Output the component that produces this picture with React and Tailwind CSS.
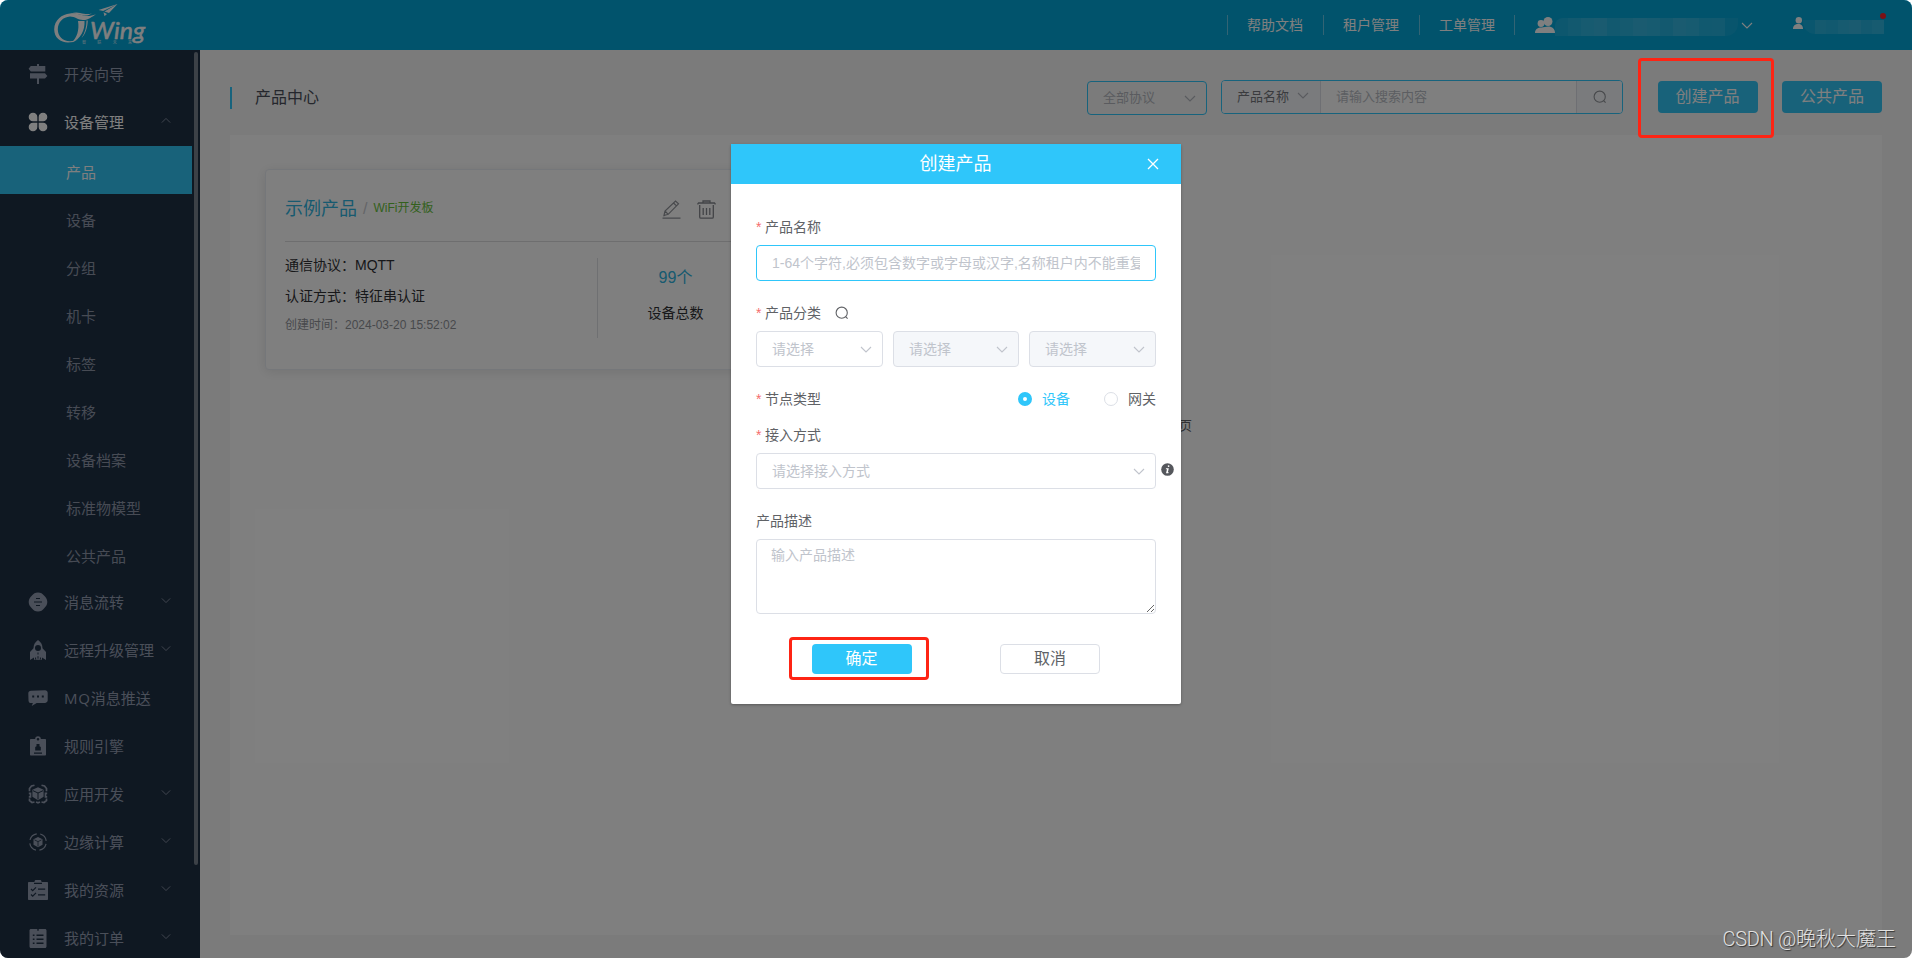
import React from "react";

const paths = {
  guide: (
    <>
      <path d="M9 0h2v2h6.300v5.500H2.800L0.600 4.800 2.800 2H9z" />
      <path d="M2 9.200h15L19.400 12 17 14.500h-6V20H9v-5.500H2z" />
    </>
  ),
  device: (
    <>
      <path d="M5 0.700C7.500 0.700 9.300 2.500 9.300 5v4.300H5C2.500 9.300 0.700 7.500 0.700 5S2.500 0.700 5 0.700z" />
      <path d="M15 0.700c2.500 0 4.300 1.800 4.300 4.300S17.500 9.300 15 9.300h-4.300V5c0-2.500 1.800-4.300 4.300-4.300z" />
      <path d="M5 10.700h4.300V15c0 2.500-1.800 4.300-4.300 4.300S0.700 17.500 0.700 15 2.500 10.700 5 10.700z" />
      <path d="M10.700 10.700H15c2.500 0 4.300 1.800 4.300 4.300s-1.800 4.300-4.300 4.300-4.300-1.800-4.300-4.300z" />
    </>
  ),
  flow: (
    <>
      <path d="M10 0.500c3 0 4.300 1.300 6 3s3.300 3.500 3.300 6.500-1.600 4.600-3.300 6.400-3 3.100-6 3.100-4.300-1.300-6-3.100S0.700 13 0.700 10 2.300 5.200 4 3.500 7 0.500 10 0.500z" />
      <path d="M8 6.500h4M6 10h8M8 13.500h4" stroke="#1e3045" strokeWidth="1.100" fill="none" />
    </>
  ),
  rocket: (
    <>
      <path fillRule="evenodd" d="M10 0c3 2 4.500 4.800 4.500 8.200L18 12v8l-4-2.500v2.200H6v-2.200L2 20v-8l3.500-3.800C5.500 4.800 7 2 10 0zm0 5a3 3 0 100 6 3 3 0 000-6z" />
      <path d="M10 12.500v2M10 16.200v2.500M7.600 17.500v2M12.400 17.500v2" stroke="#1e3045" strokeWidth="1" />
    </>
  ),
  chat: (
    <>
      <path d="M3 2.800L17 2.200c1.500 0 2.700 1 2.700 2.500v7.600c0 1.500-1 2.500-2.500 2.600l-8.500 0.200-5 2.900 1.200-2.900H2.800C1.300 15.100 0.600 14 0.500 12.500L0.300 5.500C0.300 3.900 1.400 2.900 3 2.800z" />
      <path d="M4.200 7.500h2v2h-2zM9 7.500h2v2H9zM13.800 7.500h2v2h-2z" fill="#1e3045" />
    </>
  ),
  badge: (
    <>
      <path fillRule="evenodd" d="M3 3h4.200C7 1.500 8.200 0.300 10 0.300S13 1.500 12.800 3H17c0.700 0 1 0.400 1 1v14.500c0 0.600-0.400 1-1 1H3c-0.600 0-1-0.400-1-1V4c0-0.600 0.400-1 1-1zm7-1a1.300 1.300 0 100 2.600A1.300 1.300 0 0010 2z" />
      <path d="M8.500 8h3v2.200L12.800 11v3.500H7.200V11l1.300-0.800zM6 16.400h8v1.300H6z" fill="#1e3045" />
    </>
  ),
  app: (
    <>
      <path d="M10 3.300l5.600 2.500v7L10 16.200l-5.600-3.400v-7z" />
      <path d="M5 6.700L10 9l5-2.300M10 9v6.500" stroke="#1e3045" strokeWidth="1" fill="none" />
      <path
        d="M6.500 1.200L3.500 2l-2 2.500v2.800M13.500 1.200l3 0.800 2 2.500v2.800M0.800 9.300h1.700v3.500H0.800M19.200 9.300h-1.700v3.500h1.700M1.500 14.500v2L4 18.500l2.500-0.500M18.500 14.500v2L16 18.500l-2.500-0.500M8 18l2 0.800 2-0.800"
        stroke="currentColor"
        strokeWidth="1.700"
        fill="none"
      />
    </>
  ),
  edge: (
    <>
      <circle cx="10" cy="10" r="8.300" fill="none" stroke="currentColor" strokeWidth="1.200" strokeDasharray="9.500 3.540" strokeDashoffset="-2" />
      <path d="M10 5l4.500 2.200v5.600L10 15.200l-4.500-2.400V7.200z" />
      <path d="M6.500 7.900L10 9.600l3.500-1.700M10 9.600v4.800" stroke="#1e3045" strokeWidth="0.800" fill="none" />
    </>
  ),
  resource: (
    <>
      <path d="M1 2h5.500V1.500c0-0.900 0.600-1.500 1.500-1.500h4c0.900 0 1.500 0.600 1.500 1.500V2H19c0.600 0 1 0.400 1 1v16c0 0.600-0.400 1-1 1H1c-0.600 0-1-0.400-1-1V3c0-0.600 0.400-1 1-1z" />
      <path d="M6 3.400h8M3 9l1.700 1.600L8 7.300M3 14.500l1.700 1.600L8 12.800M10 9.200h7.200M10 14.800h7.200" stroke="#1e3045" strokeWidth="1.200" fill="none" />
    </>
  ),
  order: (
    <>
      <path d="M3 1h14c0.900 0 1.500 0.600 1.500 1.500v16c0 0.900-0.600 1.500-1.500 1.500H3c-0.900 0-1.500-0.600-1.500-1.500v-16C1.500 1.600 2.100 1 3 1z" />
      <path d="M10 0v2.800M4.800 7.200h1.700M4.800 11.200h1.700M4.800 15.200h1.700M8.500 7.200h7M8.500 11.200h7M8.500 15.200h7" stroke="#1e3045" strokeWidth="1.400" fill="none" />
    </>
  ),
};

const topItems = [
  { icon: "guide", label: "开发向导" },
  { icon: "device", label: "设备管理", open: true, arrow: true },
];

const subItems = ["产品", "设备", "分组", "机卡", "标签", "转移", "设备档案", "标准物模型", "公共产品"];

const bottomItems = [
  { icon: "flow", label: "消息流转", arrow: true },
  { icon: "rocket", label: "远程升级管理", arrow: true },
  { icon: "chat", label: "消息推送", prefix: "MQ" },
  { icon: "badge", label: "规则引擎" },
  { icon: "app", label: "应用开发", arrow: true },
  { icon: "edge", label: "边缘计算", arrow: true },
  { icon: "resource", label: "我的资源", arrow: true },
  { icon: "order", label: "我的订单", arrow: true },
];

function Chevron({ className = "", up = false }) {
  return (
    <svg viewBox="0 0 12 7" className={`h-[7px] w-3 shrink-0 ${className}`} fill="none" stroke="currentColor" strokeWidth="1.100">
      <path d={up ? "M1 6l5-5 5 5" : "M1 1l5 5 5-5"} />
    </svg>
  );
}

function SearchIcon({ className = "" }) {
  return (
    <svg viewBox="0 0 14 14" className={`size-3.5 shrink-0 ${className}`} fill="none" stroke="currentColor" strokeWidth="1.100">
      <circle cx="6.700" cy="6.700" r="5.600" />
      <path d="M10.600 10.600l2 2" />
    </svg>
  );
}

function MenuItem({ item }) {
  return (
    <li className={`flex h-12 items-center pl-7 ${item.open ? "text-white" : "text-[#959eb2]"}`}>
      <svg viewBox="0 0 20 20" className="size-5 shrink-0" fill="currentColor">
        {paths[item.icon]}
      </svg>
      <span className="ml-4 w-[97px] whitespace-nowrap">
        {item.prefix && <span className="tracking-[0.8px]">{item.prefix}</span>}
        {item.label}
      </span>
      {item.arrow && <Chevron up={item.open} className="mb-[3px] h-[6px] w-[10px] text-[#8a93a5]" />}
    </li>
  );
}

function Sidebar() {
  return (
    <aside className="flex h-[908px] w-[200px] shrink-0 overflow-hidden bg-[#1e3045] font-['Open_Sans','Noto_Sans_CJK_SC',sans-serif] text-[15px] leading-[22px]">
      <ul className="w-48">
        {topItems.map((i) => (
          <MenuItem key={i.label} item={i} />
        ))}
        {subItems.map((s, n) => (
          <li key={s} className={`flex h-12 items-center pt-[3px] pl-[66px] ${n === 0 ? "bg-[#30c4f5] text-white" : "text-[#8e97a9]"}`}>
            {s}
          </li>
        ))}
        {bottomItems.map((i) => (
          <MenuItem key={i.label} item={i} />
        ))}
      </ul>
      <div className="mt-0.5 ml-0.5 h-[813px] w-1 rounded-full bg-[#78828f]" />
    </aside>
  );
}

function Logo() {
  return (
    <svg viewBox="0 0 94 44" className="ml-[53px] h-11 w-[94px] overflow-visible" fill="#fff">
      <path fillRule="evenodd" d="M17 10.500C9 11 1.200 17 1.200 26.500 1.200 34.500 7.500 39.500 15 39.500c4 0 7.500-1 10-3.500-2.500 1.500-5 2.200-8 2.200C9.500 38.200 4.800 33 4.800 26.500 4.800 19 10 14 17 13.500c5 0 8 3.500 13 3.500 6 0 9-3.500 13-5.800-4 1.300-7 2.300-11 1.600-5.500-1-9-3-15-2.300z" />
      <path d="M18 10.500c5-2 9-0.500 13 0.300 3 0.600 6 0.300 8-0.600-3 2.300-6 2.700-9 2.100-4-0.900-7-2.200-12-1.800z" />
      <path d="M25 18h6.500C32 27 28 36 18.500 39.500 24 35 26.500 27 25 18z" />
      <path d="M33.500 17.500h1.300C34.500 25 32.500 31 28.500 35 32 30 33.500 24 33.500 17.500z" />
      <path d="M64.500 1L45.500 7l4.700 1zM64.500 1L51.500 8.600l4.500 1.500zM50.500 9.200l1 4L54 11z" />
      <text x="37" y="36" textLength="55" lengthAdjust="spacingAndGlyphs" className="font-['Lato',sans-serif] text-[24px] font-normal italic" stroke="#fff" strokeWidth="0.500">
        Wing
      </text>
      <text x="29" y="41.300" textLength="50" className="font-['Noto_Sans_CJK_SC',sans-serif] text-[4px]" fillOpacity="0.800">
        智联未来
      </text>
    </svg>
  );
}

const mosaicA = ["bg-white/10", "bg-white/14", "bg-white/18", "bg-white/20", "bg-white/14", "bg-white/16", "bg-white/20", "bg-white/18", "bg-white/15", "bg-white/20", "bg-white/18", "bg-white/13", "bg-white/14", "bg-white/6"];
const mosaicB = ["bg-white/8", "bg-white/16", "bg-white/14", "bg-white/18", "bg-white/20", "bg-white/15", "bg-white/18"];

function Header() {
  return (
    <header className="flex h-[50px] items-center bg-[#02a6d9] text-sm text-white">
      <Logo />
      <nav className="ml-[1080px] flex h-5 w-72">
        {["帮助文档", "租户管理", "工单管理"].map((t, n) => (
          <a key={t} className={`flex items-center border-l border-white/40 pl-[19px] whitespace-nowrap ${n === 2 ? "w-[95px]" : "w-24"}`}>
            {t}
          </a>
        ))}
        <span className="border-l border-white/40" />
      </nav>
      <svg viewBox="0 0 20 16" className="ml-[20px] h-4 w-5 shrink-0" fill="#fff">
        <circle cx="6" cy="6.500" r="3.400" />
        <circle cx="13" cy="4.500" r="4.500" />
        <path d="M0 16c0-4 3-5.500 6.500-5.500L13 9.500c4.500 0 7 2.500 7 6.500z" />
      </svg>
      <div className="mt-[3px] flex h-[18px] w-[183px] overflow-hidden rounded-tl-lg rounded-br-xl">
        {mosaicA.map((c, n) => (
          <span key={n} className={`flex-1 ${c}`} />
        ))}
      </div>
      <Chevron className="mt-px ml-[3px]" />
      <svg viewBox="0 0 10 12" className="mb-1 ml-[40px] h-3 w-2.5 shrink-0" fill="#fff">
        <circle cx="5.800" cy="3.200" r="3.200" />
        <path d="M0 12c0-3.500 2-5 5.500-5 2.500 0 4.500 1.500 4.500 5z" />
      </svg>
      <div className="relative mt-1 flex h-3.5 w-[81px]">
        <div className="flex w-full overflow-hidden rounded-bl-xl">
          {mosaicB.map((c, n) => (
            <span key={n} className={`flex-1 ${c}`} />
          ))}
        </div>
        <span className="absolute -top-[7px] -right-[2px] size-1.5 rounded-full bg-[#f5222d]" />
      </div>
    </header>
  );
}

function Toolbar() {
  return (
    <div className="flex h-[85px] items-start pt-[30px] text-[13px]">
      <div className="mt-[7px] h-[22px] w-0.5 bg-[#2fc6fa]" />
      <h1 className="mt-1.5 ml-[23px] text-base leading-6 text-[#4a4f5a]">产品中心</h1>
      <div className="mt-px ml-auto flex h-[34px] w-[120px] items-center justify-between rounded border border-[#2fc6fa] pr-[10px] pl-[15px] text-[#b4b7bf]">
        全部协议
        <Chevron className="mt-px" />
      </div>
      <div className="ml-3.5 flex h-[34px] w-[402px] overflow-hidden rounded border border-[#2fc6fa] bg-white">
        <div className="flex w-[99px] items-center border-r border-[#dcdfe6] bg-[#f5f7fa] pl-[15px] text-[#75777d]">
          产品名称
          <Chevron className="mb-1 ml-2 text-[#b4b7bf]" />
        </div>
        <input className="flex-1 px-[15px] outline-none placeholder:text-[#b9bcc4]" placeholder="请输入搜索内容" />
        <div className="flex w-[46px] items-center justify-center border-l border-[#dcdfe6] bg-[#f5f7fa] text-[#909399]">
          <SearchIcon />
        </div>
      </div>
      <div className="relative mt-px ml-[35px]">
        <button className="block h-8 w-[100px] rounded bg-[#30c4f5] pr-px text-base leading-8 text-white">创建产品</button>
        <span className="pointer-events-none absolute -top-[23px] -left-[20px] z-50 h-[80px] w-[136px] rounded border-3 border-[#fe2414]" />
      </div>
      <button className="mt-px ml-6 h-8 w-[100px] rounded bg-[#30c4f5] text-base leading-8 text-white">公共产品</button>
    </div>
  );
}

function ProductCard() {
  return (
    <article className="h-[201px] w-[508px] rounded border border-[#ebeef5] bg-white px-[19px] shadow-[0_2px_12px_0_rgba(0,0,0,0.1)]">
      <div className="flex h-[72px] items-center border-b border-[#dcdddf] pt-[7px]">
        <h2 className="text-lg text-[#2fb4e0]">示例产品</h2>
        <span className="mx-[6px] text-base text-[#c8cad0]">/</span>
        <span className="mb-[3px] text-xs text-[#67c23a]">WiFi开发板</span>
        <svg viewBox="0 0 19 19" className="ml-auto size-[19px] text-[#909399]" fill="none" stroke="currentColor" strokeWidth="1.200">
          <path d="M0.500 18.200h18M2 15.500l1-4.500L13.500 1l3 2.800L6.200 14.300zM11.500 3l3 2.900M3 11l3.200 3.300M1.500 16l2-1" />
        </svg>
        <svg viewBox="0 0 19 19" className="mr-[37px] ml-4 size-[19px] text-[#85888e]" fill="none" stroke="currentColor" strokeWidth="1.300">
          <path d="M0.500 4.300L1.500 3h16l1 1.300M6 3V1h7v2M2.700 5v12c0 0.700 0.400 1.200 1.200 1.200h11.200c0.800 0 1.200-0.500 1.200-1.200V5M6.200 8v7M9.500 8v7M12.800 8v7" />
        </svg>
      </div>
      <div className="flex pt-[13px]">
        <div className="w-[312px] text-sm leading-[21px] text-[#2f3034]">
          <p>通信协议：MQTT</p>
          <p className="mt-2.5">认证方式：特征串认证</p>
          <p className="mt-[8px] text-xs leading-[21px] text-[#909399]">创建时间：2024-03-20 15:52:02</p>
        </div>
        <div className="mt-[3px] h-20 flex-1 border-l border-[#dfe1e5] pt-2 text-center">
          <p className="text-base text-[#2fb4e0]">99个</p>
          <p className="mt-[13px] text-sm text-[#2f3034]">设备总数</p>
        </div>
      </div>
    </article>
  );
}

function Label({ children, required = true }) {
  return (
    <div className="flex h-9 items-center text-sm text-[#606266]">
      {required && <span className="mr-1 w-[5px] text-[#f56c6c]">*</span>}
      {children}
    </div>
  );
}

function Select({ text, className = "" }) {
  return (
    <div className={`flex h-9 items-center justify-between rounded border border-[#dcdfe6] pr-[10px] pl-[15px] text-sm text-[#c0c4cc] ${className}`}>
      {text}
      <Chevron />
    </div>
  );
}

function Dialog() {
  return (
    <section className="mt-[144px] ml-[731px] h-[560px] w-[450px] rounded-xs bg-white shadow-[0_1px_3px_rgba(0,0,0,0.3)]">
      <header className="flex h-10 items-center bg-[#2fc6fa] text-white">
        <h2 className="w-full pr-px text-center text-lg">创建产品</h2>
        <svg viewBox="0 0 12 12" className="mr-[22px] -ml-[34px] size-3 shrink-0" stroke="currentColor" strokeWidth="1.300">
          <path d="M1 1l10 10M11 1L1 11" />
        </svg>
      </header>
      <div className="px-[25px] pt-[25px]">
        <Label>产品名称</Label>
        <input
          className="block h-9 w-full rounded border border-[#2fc6fa] px-[15px] text-sm outline-none placeholder:text-[#c0c4cc]"
          placeholder="1-64个字符,必须包含数字或字母或汉字,名称租户内不能重复"
        />
        <div className="mt-3.5">
          <Label>
            产品分类
            <SearchIcon className="ml-3.5" />
          </Label>
        </div>
        <div className="flex justify-between">
          <Select text="请选择" className="w-[127px]" />
          <Select text="请选择" className="w-[126px] bg-[#f5f7fa]" />
          <Select text="请选择" className="w-[127px] bg-[#f5f7fa]" />
        </div>
        <div className="mt-3.5 flex items-center justify-between">
          <Label>节点类型</Label>
          <div className="flex items-center text-sm">
            <span className="size-3.5 rounded-full border-5 border-[#2fc6fa] bg-white" />
            <span className="ml-2.5 text-[#2fc6fa]">设备</span>
            <span className="ml-[34px] size-3.5 rounded-full border border-[#dcdfe6]" />
            <span className="ml-2.5 text-[#606266]">网关</span>
          </div>
        </div>
        <Label>接入方式</Label>
        <div className="flex items-center">
          <Select text="请选择接入方式" className="w-[400px] shrink-0" />
          <svg viewBox="0 0 13 13" className="mb-[3px] ml-[4.500px] size-[13px] shrink-0">
            <circle cx="6.500" cy="6.500" r="6.300" fill="#55575c" />
            <path d="M7.600 2.200a0.900 0.900 0 110 1.800 0.900 0.900 0 010-1.800zM5 5.200h2.800L6.900 9.300h0.900l-0.400 0.900H5l1-4H4.800z" fill="#fff" />
          </svg>
        </div>
        <div className="mt-3.5">
          <Label required={false}>产品描述</Label>
        </div>
        <textarea
          className="block h-[75px] w-full resize rounded border border-[#dcdfe6] px-[14px] py-[5px] text-sm leading-[21px] outline-none placeholder:text-[#c0c4cc]"
          placeholder="输入产品描述"
        />
        <div className="mt-[30px] flex pl-14">
          <div className="relative">
            <button className="block h-[30px] w-[100px] rounded bg-[#2fc6fa] pr-px text-base leading-[30px] text-white">确定</button>
            <span className="pointer-events-none absolute -top-[7px] -left-[23px] h-[43px] w-[140px] rounded border-3 border-[#fe2414]" />
          </div>
          <button className="ml-[88px] h-[30px] w-[100px] rounded border border-[#dcdfe6] text-base leading-[28px] text-[#606266]">取消</button>
        </div>
      </div>
    </section>
  );
}

export default function App() {
  return (
    <div className="h-[958px] w-[1912px] overflow-hidden bg-white font-['Liberation_Sans','Noto_Sans_CJK_SC',sans-serif]">
      <div className="relative h-full overflow-hidden rounded-lg">
        <Header />
        <div className="flex">
          <Sidebar />
          <main className="h-[908px] flex-1 bg-[#f6f6f6] px-[30px]">
            <Toolbar />
            <div className="h-[800px] bg-white pt-[34px] pl-[35px]">
              <ProductCard />
              <p className="mt-[46px] ml-[914px] text-[13px] leading-5 text-[#606266]">页</p>
            </div>
          </main>
        </div>
        <div className="absolute inset-0 z-10 bg-black/50">
          <Dialog />
        </div>
        <p className="absolute right-[16px] bottom-[5px] z-20 font-['Roboto','Noto_Sans_CJK_SC',sans-serif] text-[20px] leading-7 font-light text-[#e2e2e2] [text-shadow:1px_1px_1px_#333]">
          <span className="tracking-[-0.3px]">CSDN @</span>
          晚秋大魔王
        </p>
      </div>
    </div>
  );
}
